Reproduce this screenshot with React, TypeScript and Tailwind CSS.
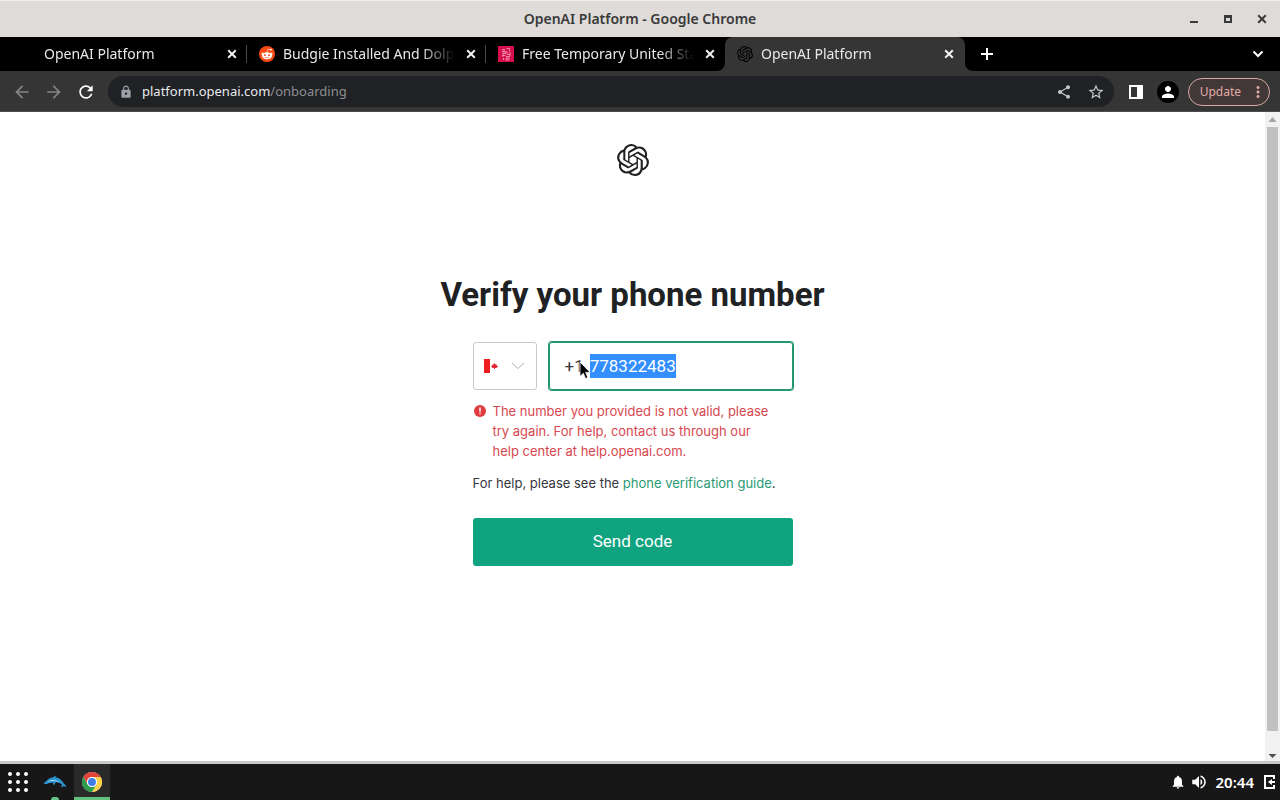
import { useEffect, useRef, type ReactNode } from "react";
import { FaRedditAlien } from "react-icons/fa";
import {
  MdArrowBack,
  MdArrowForward,
  MdLock,
  MdMoreVert,
  MdNotifications,
  MdPerson,
  MdRefresh,
  MdShare,
  MdStarBorder,
  MdVolumeUp,
} from "react-icons/md";

function OpenAILogo({ className }: { className: string }) {
  return (
    <svg viewBox="0 0 24 24" fill="currentColor" className={className} aria-hidden="true">
      <path d="M22.2819 9.8211a5.9847 5.9847 0 0 0-.5157-4.9108 6.0462 6.0462 0 0 0-6.5098-2.9A6.0651 6.0651 0 0 0 4.9807 4.1818a5.9847 5.9847 0 0 0-3.9977 2.9 6.0462 6.0462 0 0 0 .7427 7.0966 5.98 5.98 0 0 0 .511 4.9107 6.051 6.051 0 0 0 6.5146 2.9001A5.9847 5.9847 0 0 0 13.2599 24a6.0557 6.0557 0 0 0 5.7718-4.2058 5.9894 5.9894 0 0 0 3.9977-2.9001 6.0557 6.0557 0 0 0-.7475-7.0729zm-9.022 12.6081a4.4755 4.4755 0 0 1-2.8764-1.0408l.1419-.0804 4.7783-2.7582a.7948.7948 0 0 0 .3927-.6813v-6.7369l2.02 1.1686a.071.071 0 0 1 .038.052v5.5826a4.504 4.504 0 0 1-4.4945 4.4944zm-9.6607-4.1254a4.4708 4.4708 0 0 1-.5346-3.0137l.142.0852 4.783 2.7582a.7712.7712 0 0 0 .7806 0l5.8428-3.3685v2.3324a.0804.0804 0 0 1-.0332.0615L9.74 19.9502a4.4992 4.4992 0 0 1-6.1408-1.6464zM2.3408 7.8956a4.485 4.485 0 0 1 2.3655-1.9728V11.6a.7664.7664 0 0 0 .3879.6765l5.8144 3.3543-2.0201 1.1685a.0757.0757 0 0 1-.071 0l-4.8303-2.7865A4.504 4.504 0 0 1 2.3408 7.8956zm16.5963 3.8558L13.1038 8.364 15.1192 7.2a.0757.0757 0 0 1 .071 0l4.8303 2.7913a4.4944 4.4944 0 0 1-.6765 8.1042v-5.6772a.79.79 0 0 0-.407-.667zm2.0107-3.0231l-.142-.0852-4.7735-2.7818a.7759.7759 0 0 0-.7854 0L9.409 9.2297V6.8974a.0662.0662 0 0 1 .0284-.0615l4.8303-2.7866a4.4992 4.4992 0 0 1 6.6802 4.66zM8.3065 12.863l-2.02-1.1638a.0804.0804 0 0 1-.038-.0567V6.0742a4.4992 4.4992 0 0 1 7.3757-3.4537l-.142.0805L8.704 5.459a.7948.7948 0 0 0-.3927.6813zm1.0976-2.3654l2.602-1.4998 2.6069 1.4998v2.9994l-2.5974 1.4997-2.6067-1.4997Z" />
    </svg>
  );
}

function ChromeLogo() {
  return (
    <svg viewBox="0 0 48 48" className="size-5" aria-hidden="true">
      <circle cx="24" cy="24" r="24" fill="#fff" />
      <path d="M24 12h20.8A24 24 0 0 0 3.2 12l10.4 18A12 12 0 0 1 24 12z" fill="#e0443a" />
      <path d="M34.4 30 24 48a24 24 0 0 0 20.8-36H24a12 12 0 0 1 10.4 18z" fill="#fbd04b" />
      <path d="M13.6 30 3.2 12A24 24 0 0 0 24 48l10.4-18a12 12 0 0 1-20.8 0z" fill="#2a9b4c" />
      <circle cx="24" cy="24" r="12" fill="#fff" />
      <circle cx="24" cy="24" r="9.5" fill="#3f7ce8" />
    </svg>
  );
}

function DolphinLogo() {
  return (
    <svg viewBox="0 0 24 14" className="h-3.5 w-6" aria-hidden="true">
      <path
        d="M.5 8.600C1.300 7.300 2.800 6.800 4 5.500 5.500 3.600 7.800 2.500 10.200 2.200L12.500.5c.3.600.2 1.200 0 1.800 4 .7 6.600 3 8.300 6.300 1.300.9 2.200 2.200 2.600 4-1-1-2-1.400-3-1.400-.6.600-1.300.9-2.300 1 .4-1 .7-1.800.9-2.700C17 7.900 15 7.300 12.700 7.300l-1.700 3c-.8-.7-1-1.600-.9-2.700-2.500.2-4.600.9-6.300 1.300-1.200.2-2.300.1-3.300-.3z"
        fill="#2b93cf"
      />
      <path d="M4.500 6.800c3.200-2.400 9-2.600 13 1-4-2-8.500-2.100-13-1z" fill="#a5e0f7" />
    </svg>
  );
}

function AddressFavicon() {
  return (
    <svg viewBox="0 0 16 16" className="size-4" aria-hidden="true">
      <rect width="16" height="16" fill="#d60f4c" />
      <path
        d="M4 3.500h3M8.500 2.500h3v3M3.500 5.500h4v2h-3M6 4v3M9 5v3.500h3M12 6v4M4 9.500h3.500M5 8v3M8 10.500h4M5.500 12v2M8 12v2h3v-2z"
        fill="none"
        stroke="#f7a3bd"
        strokeWidth="0.8"
      />
    </svg>
  );
}

function CloseIcon() {
  return (
    <svg viewBox="0 0 16 16" className="size-4" fill="none" stroke="currentColor" strokeWidth="2" aria-hidden="true">
      <path d="M4.200 4.200l7.600 7.600M11.800 4.200l-7.600 7.600" />
    </svg>
  );
}

type TabProps = { title: string; icon?: ReactNode; active?: boolean; divider?: boolean };

function Tab({ title, icon, active, divider }: TabProps) {
  return (
    <div
      className={
        active
          ? "relative flex h-full w-[240px] items-center rounded-t-lg bg-[#353535] pr-2 pl-3"
          : "relative flex h-full w-[239px] items-center pr-[7px] pl-3"
      }
    >
      <span className="flex size-4 shrink-0 items-center justify-center">{icon}</span>
      <button
        type="button"
        role="tab"
        aria-selected={!!active}
        className="ml-2 min-w-0 flex-1 overflow-hidden text-left text-sm whitespace-nowrap text-[#e8e8e8] [mask-image:linear-gradient(to_right,#000_80%,transparent)]"
      >
        {title}
      </button>
      <button type="button" aria-label={`Close ${title}`} className="ml-2 text-[#f1f1f1]">
        <CloseIcon />
      </button>
      {divider && <span className="absolute top-2 right-0 h-[18px] w-px bg-[#4a4a4a]" />}
      {active && (
        <>
          <svg viewBox="0 0 8 8" className="absolute bottom-0 -left-2 size-2" aria-hidden="true">
            <path d="M8 0v8H0a8 8 0 0 0 8-8z" fill="#353535" />
          </svg>
          <svg viewBox="0 0 8 8" className="absolute -right-2 bottom-0 size-2" aria-hidden="true">
            <path d="M0 0v8h8a8 8 0 0 1-8-8z" fill="#353535" />
          </svg>
        </>
      )}
    </div>
  );
}

function TitleBar() {
  return (
    <header className="relative flex h-[37px] items-center justify-center border-t border-[#f2f0ee] bg-[#dedbd8] text-[#3a3a3a]">
      <h1 className="text-sm font-semibold">OpenAI Platform - Google Chrome</h1>
      <div className="absolute inset-y-0 right-0 flex items-center gap-[18px] pr-[10px]">
        <button type="button" aria-label="Minimize">
          <svg viewBox="0 0 16 16" className="size-4" aria-hidden="true">
            <path d="M4 10h8v2H4z" fill="currentColor" />
          </svg>
        </button>
        <button type="button" aria-label="Maximize">
          <svg viewBox="0 0 16 16" className="size-4" aria-hidden="true">
            <path d="M4 4h8v8H4zM6 7v3h4V7z" fill="currentColor" fillRule="evenodd" />
          </svg>
        </button>
        <button type="button" aria-label="Close window">
          <CloseIcon />
        </button>
      </div>
    </header>
  );
}

function TabStrip() {
  return (
    <div className="flex h-[34px] items-center bg-black pl-2">
      <div role="tablist" className="flex h-full">
        <Tab title="OpenAI Platform" divider />
        <Tab
          title="Budgie Installed And Dolphin"
          divider
          icon={
            <span className="flex size-4 items-center justify-center rounded-full bg-[#fa4a14] text-white">
              <FaRedditAlien className="size-3" />
            </span>
          }
        />
        <Tab title="Free Temporary United States" icon={<AddressFavicon />} />
        <Tab title="OpenAI Platform" active icon={<OpenAILogo className="size-4 text-black" />} />
      </div>
      <button type="button" aria-label="New tab" className="ml-[15px] text-white">
        <svg viewBox="0 0 14 14" className="size-3.5" aria-hidden="true">
          <path d="M6 1h2v5h5v2H8v5H6V8H1V6h5z" fill="currentColor" />
        </svg>
      </button>
      <button type="button" aria-label="Search tabs" className="mr-4 ml-auto text-white">
        <svg viewBox="0 0 12 12" className="size-3" fill="none" stroke="currentColor" strokeWidth="2" aria-hidden="true">
          <path d="M1.500 3.500L6 8l4.500-4.500" />
        </svg>
      </button>
    </div>
  );
}

function Toolbar() {
  return (
    <div className="flex h-[41px] items-center border-b border-[#4a4b4b] bg-[#353535] pt-px pr-[10px] pl-3">
      <div className="flex gap-3">
        <button type="button" aria-label="Back" className="text-[#858585]">
          <MdArrowBack className="size-5" />
        </button>
        <button type="button" aria-label="Forward" className="text-[#858585]">
          <MdArrowForward className="size-5" />
        </button>
        <button type="button" aria-label="Reload" className="text-white">
          <MdRefresh className="size-5" />
        </button>
      </div>
      <div className="ml-3 flex h-[31px] flex-1 items-center rounded-full bg-[#202124] pr-[9px] pl-[11px]">
        <MdLock className="size-3.5 text-[#9aa0a6]" />
        <p className="ml-[9px] flex-1 text-[13px] text-[#8c8f93]">
          <span className="text-[#e8eaed]">platform.openai.com</span>/onboarding
        </p>
        <button type="button" aria-label="Share" className="text-[#c4c7c9]">
          <MdShare className="size-4" />
        </button>
        <button type="button" aria-label="Bookmark this page" className="ml-[15px] text-[#c4c7c9]">
          <MdStarBorder className="size-[18px]" />
        </button>
      </div>
      <button type="button" aria-label="Side panel" className="ml-[14px] text-white">
        <svg viewBox="0 0 16 16" className="size-4" aria-hidden="true">
          <path d="M1 1h14v14H1zM3 3v10h6V3z" fill="currentColor" fillRule="evenodd" />
        </svg>
      </button>
      <button
        type="button"
        aria-label="Profile"
        className="ml-[13px] flex size-[22px] items-center justify-center rounded-full bg-black text-white"
      >
        <MdPerson className="size-[18px]" />
      </button>
      <button
        type="button"
        className="ml-[9px] flex h-7 items-center gap-2 rounded-full border border-[#d8a8a4] bg-[#433838] pr-0.5 pl-[11px] text-xs text-[#e0aaa4]"
      >
        Update
        <MdMoreVert className="size-[18px]" />
      </button>
    </div>
  );
}

function CountrySelect() {
  return (
    <div className="relative flex h-12 w-16 shrink-0 items-center rounded-[3px] border border-[#c8c9d1]">
      <svg viewBox="0 0 16 16" className="ml-[10px] size-4" aria-hidden="true">
        <path d="M0 1h6v14H0z" fill="#ef1f20" />
        <path d="M10.500 5l1 1.600 1.100-.4-.1 1.200 1.700.8-1.900 1.700h-1.300V11h-1V9.900H8.700L6.800 8.200l1.700-.8-.1-1.200 1.100.4z" fill="#e02430" />
      </svg>
      <svg viewBox="0 0 14 8" className="ml-[11px] h-2 w-3.5" fill="none" stroke="#b4b5bd" aria-hidden="true">
        <path d="M1 1l6 5.500L13 1" />
      </svg>
      <select aria-label="Country" className="absolute inset-0 appearance-none bg-transparent text-transparent outline-none">
        <option>Canada</option>
      </select>
    </div>
  );
}

function PhoneField() {
  const input = useRef<HTMLInputElement>(null);

  useEffect(() => {
    input.current?.focus();
    input.current?.select();
  }, []);

  return (
    <label className="relative flex h-12 min-w-0 flex-1 items-center rounded-[3px] border border-[#20976f] px-[15px] font-[Roboto,sans-serif] text-[17px] leading-6 text-[#353740] ring-1 ring-[#20976f]">
      <span>+1</span>
      <input
        ref={input}
        type="tel"
        aria-label="Phone number"
        defaultValue="778322483"
        className="ml-1.5 h-6 min-w-0 flex-1 bg-transparent outline-none selection:bg-[#338fff] selection:text-white"
      />
      <svg viewBox="0 0 12 19" className="absolute top-[18px] left-[29px] h-[19px] w-3" aria-hidden="true">
        <path
          d="M1 1v14.500l3.300-3.200 2.200 5.200 2.400-1-2.200-5.100h4.500z"
          fill="#000"
          stroke="#fff"
          strokeWidth="0.8"
        />
      </svg>
    </label>
  );
}

function VerifyPhone() {
  return (
    <main className="flex flex-1 flex-col items-center px-4 font-[Inter,sans-serif] text-[#353740]">
      <OpenAILogo className="mt-8 size-8 text-[#202123]" />
      <h2 className="mt-[99px] text-center font-[Roboto,sans-serif] text-[33px] leading-10 font-bold text-[#202123]">
        Verify your phone number
      </h2>
      <form className="mt-[27px] w-full max-w-80" onSubmit={(e) => e.preventDefault()}>
        <div className="flex gap-3">
          <CountrySelect />
          <PhoneField />
        </div>
        <div role="alert" className="mt-[11px] flex gap-[7px] pr-6 pl-px text-[13px] leading-5 text-[#d6484f]">
          <svg viewBox="0 0 12 12" className="mt-1 size-3 shrink-0" aria-hidden="true">
            <circle cx="6" cy="6" r="6" fill="#de3c40" />
            <path d="M5.300 2.500h1.400v4.200H5.300zM5.300 7.800h1.400v1.500H5.300z" fill="#fff" />
          </svg>
          <p>The number you provided is not valid, please try again. For help, contact us through our help center at help.openai.com.</p>
        </div>
        <p className="mt-3 text-[13px] leading-5">
          For help, please see the{" "}
          <a href="#guide" className="text-[#2a9a74]">
            phone verification guide
          </a>
          .
        </p>
        <button
          type="submit"
          className="mt-[25px] h-12 w-full rounded-[3px] bg-[#10a37f] font-[Roboto,sans-serif] text-[17px] text-white"
        >
          Send code
        </button>
      </form>
    </main>
  );
}

function Scrollbar() {
  return (
    <div aria-hidden="true" className="flex w-[15px] flex-col items-center bg-[#f1f1f1]">
      <svg viewBox="0 0 15 15" className="size-[15px]">
        <path d="M3.500 10h8l-4-5z" fill="#a3a3a3" />
      </svg>
      <div className="mb-[15px] w-[11px] flex-1 bg-[#c1c1c1]" />
      <svg viewBox="0 0 15 15" className="size-[15px]">
        <path d="M3.500 8h8l-4 4z" fill="#505050" />
      </svg>
    </div>
  );
}

function Taskbar() {
  return (
    <footer className="flex h-9 items-center bg-[#171717] text-white">
      <button type="button" aria-label="Applications" className="flex h-full w-9 items-center justify-center">
        <svg viewBox="0 0 20 20" className="size-5" fill="currentColor" aria-hidden="true">
          {[2, 10, 18].map((y) => [2, 10, 18].map((x) => <circle key={`${x}-${y}`} cx={x} cy={y} r="2" />))}
        </svg>
      </button>
      <button type="button" aria-label="Dolphin" className="relative flex h-full w-[38px] items-center justify-center">
        <DolphinLogo />
        <span className="absolute bottom-0 h-[3px] w-2 rounded-t-sm bg-[#63c78a]" />
      </button>
      <button
        type="button"
        aria-label="Google Chrome"
        className="flex h-full w-9 items-center justify-center border-b-[3px] border-[#63c07d] bg-[#2a2a2a] pt-[3px]"
      >
        <ChromeLogo />
      </button>
      <div className="ml-auto flex items-center pr-1">
        <MdNotifications className="size-4" />
        <MdVolumeUp className="ml-1 size-[18px]" />
        <time className="ml-2 text-[15px] font-semibold">20:44</time>
        <button type="button" aria-label="Leave session" className="ml-2">
          <svg viewBox="0 0 14 16" className="h-4 w-3.5" fill="none" stroke="currentColor" strokeWidth="2" aria-hidden="true">
            <path d="M12 5V2H3v12h9v-3M13 8H7" />
            <path d="M10 5v6L6 8z" fill="currentColor" stroke="none" />
          </svg>
        </button>
      </div>
    </footer>
  );
}

export default function App() {
  return (
    <div className="flex min-h-screen flex-col bg-white font-['Noto_Sans',sans-serif]">
      <TitleBar />
      <TabStrip />
      <Toolbar />
      <div className="flex flex-1 border-b-[3px] border-[#c9c9c9]">
        <VerifyPhone />
        <Scrollbar />
      </div>
      <Taskbar />
    </div>
  );
}
